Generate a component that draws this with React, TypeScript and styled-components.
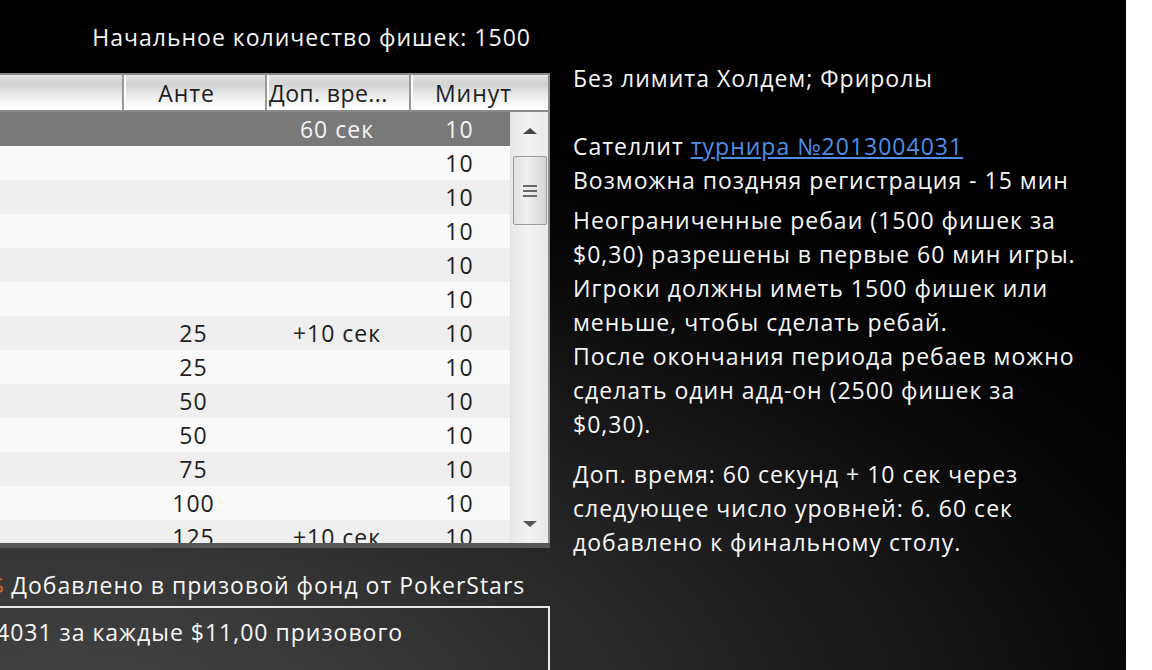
import React from "react";
import styled, { createGlobalStyle } from "styled-components";

const GlobalStyle = createGlobalStyle`
    html, body {
        margin: 0;
        padding: 0;
        background: #ffffff;
        overflow: hidden;
    }
    * {
        box-sizing: border-box;
    }
`;

const Page = styled.div`
    display: flex;
    width: 1152px;
    height: 670px;
    font-family: "Open Sans", "DejaVu Sans", sans-serif;
    font-size: 23px;
    letter-spacing: 1px;
    color: #f6f6f6;
`;

const Main = styled.div`
    display: grid;
    grid-template-columns: 550px 1fr;
    column-gap: 23px;
    width: 1126px;
    height: 670px;
    overflow: hidden;
    background: radial-gradient(ellipse 120% 95% at 5% 108%, #474747 0%, #333 30%, #1a1a1a 60%, #050505 85%, #000 100%);
`;

const Strip = styled.div`
    flex: 1;
    background: #ffffff;
`;

const LeftCol = styled.div`
    display: flex;
    flex-direction: column;
    min-width: 0;
`;

const StartChips = styled.div`
    height: 73px;
    display: flex;
    align-items: center;
    justify-content: flex-end;
    padding-right: 19px;
`;

const Table = styled.div`
    display: flex;
    flex-direction: column;
    width: 550px;
    height: 475px;
    background: #f8f8f8;
    border-bottom: 5px solid #575757;
    color: #1e1e1e;
    overflow: hidden;
`;

const HeaderRow = styled.div`
    display: grid;
    grid-template-columns: 122px 143px 144px 1fr;
    height: 39px;
    flex-shrink: 0;
    border-top: 2px solid #8a8a8a;
    border-right: 2px solid #8a8a8a;
    border-bottom: 2px solid #8a8a8a;
    background: linear-gradient(#e4e4e4 0%, #d2d2d2 25%, #e8e8e8 55%, #fafafa 85%, #ffffff 100%);
`;

const HeaderCell = styled.div<{ $align?: string; $pad?: number }>`
    display: flex;
    align-items: center;
    justify-content: ${(p) => p.$align || "center"};
    padding: 0 ${(p) => p.$pad ?? 2}px 0 2px;
    border-left: 2px solid #9a9a9a;
    box-shadow: inset 2px 0 0 #ffffff;
    white-space: nowrap;
    overflow: hidden;
    &:first-child {
        border-left: none;
        box-shadow: none;
    }
`;

const TruncLabel = styled.span`
    letter-spacing: 0.4px;
`;

const Body = styled.div`
    display: flex;
    flex: 1;
    min-height: 0;
`;

const Rows = styled.div`
    flex: 1;
    overflow: hidden;
`;

const Row = styled.div<{ $selected?: boolean; $alt?: boolean }>`
    display: grid;
    grid-template-columns: 122px 143px 144px 1fr;
    height: 34px;
    align-items: center;
    background: ${(p) => (p.$selected ? "#797979" : p.$alt ? "#efefef" : "#f9f9f9")};
    color: ${(p) => (p.$selected ? "#f4f4f4" : "#1e1e1e")};
`;

const Cell = styled.div`
    text-align: center;
    white-space: nowrap;
`;

const Scrollbar = styled.div`
    display: flex;
    flex-direction: column;
    align-items: center;
    width: 40px;
    background: linear-gradient(90deg, #e9e9e9, #f2f2f2 50%, #e9e9e9);
    border-left: 1px solid #e0e0e0;
    border-right: 2px solid #8a8a8a;
`;

const Arrow = styled.div<{ $down?: boolean }>`
    height: 38px;
    width: 100%;
    display: flex;
    align-items: center;
    justify-content: center;
    &::after {
        content: "";
        border-left: 7px solid transparent;
        border-right: 7px solid transparent;
        ${(p) => (p.$down ? "border-top: 6px solid #555;" : "border-bottom: 6px solid #444;")}
    }
`;

const Thumb = styled.div`
    width: 34px;
    height: 69px;
    margin-top: 6px;
    border: 1px solid #9c9c9c;
    border-radius: 2px;
    background: linear-gradient(90deg, #e2e2e2, #f0f0f0 40%, #d6d6d6);
    display: flex;
    flex-direction: column;
    align-items: center;
    justify-content: center;
    gap: 3px;
`;

const Grip = styled.div`
    width: 14px;
    height: 2px;
    background: #6a6a6a;
`;

const Spacer = styled.div`
    flex: 1;
`;

const Added = styled.div`
    height: 58px;
    display: flex;
    align-items: center;
    padding-top: 16px;
    white-space: nowrap;
`;

const Cut = styled.span`
    color: #d2602a;
    margin-left: -9px;
    margin-right: 6px;
`;

const TicketBox = styled.div`
    flex: 1;
    border: 2px solid #e8e8e8;
    border-left: none;
    border-bottom: none;
    padding-top: 8px;
    white-space: nowrap;
    overflow: hidden;
`;

const ShiftedText = styled.div`
    margin-left: -4px;
`;

const RightCol = styled.div`
    padding-top: 61px;
    line-height: 34px;
    white-space: nowrap;
`;

const Para = styled.p<{ $gap?: number }>`
    margin: ${(p) => p.$gap ?? 0}px 0 0 0;
`;

const Link = styled.a`
    color: #4c8ee6;
    text-decoration: underline;
`;

type Level = { ante: string; extra: string; minutes: string };

const levels: Level[] = [
    { ante: "", extra: "60 сек", minutes: "10" },
    { ante: "", extra: "", minutes: "10" },
    { ante: "", extra: "", minutes: "10" },
    { ante: "", extra: "", minutes: "10" },
    { ante: "", extra: "", minutes: "10" },
    { ante: "", extra: "", minutes: "10" },
    { ante: "25", extra: "+10 сек", minutes: "10" },
    { ante: "25", extra: "", minutes: "10" },
    { ante: "50", extra: "", minutes: "10" },
    { ante: "50", extra: "", minutes: "10" },
    { ante: "75", extra: "", minutes: "10" },
    { ante: "100", extra: "", minutes: "10" },
    { ante: "125", extra: "+10 сек", minutes: "10" },
];

export default function App() {
    return (
        <>
            <GlobalStyle />
            <Page>
                <Main>
                    <LeftCol>
                        <StartChips>Начальное количество фишек: 1500</StartChips>
                        <Table>
                            <HeaderRow>
                                <HeaderCell />
                                <HeaderCell $align="flex-end" $pad={50}>
                                    Анте
                                </HeaderCell>
                                <HeaderCell $align="flex-start">
                                    <TruncLabel>Доп. вре...</TruncLabel>
                                </HeaderCell>
                                <HeaderCell $pad={14}>Минут</HeaderCell>
                            </HeaderRow>
                            <Body>
                                <Rows>
                                    {levels.map((l, i) => (
                                        <Row key={i} $selected={i === 0} $alt={i % 2 === 0}>
                                            <Cell />
                                            <Cell>{l.ante}</Cell>
                                            <Cell>{l.extra}</Cell>
                                            <Cell>{l.minutes}</Cell>
                                        </Row>
                                    ))}
                                </Rows>
                                <Scrollbar>
                                    <Arrow />
                                    <Thumb>
                                        <Grip />
                                        <Grip />
                                        <Grip />
                                    </Thumb>
                                    <Spacer />
                                    <Arrow $down />
                                </Scrollbar>
                            </Body>
                        </Table>
                        <Added>
                            <Cut>$</Cut>Добавлено в призовой фонд от PokerStars
                        </Added>
                        <TicketBox>
                            <ShiftedText>4031 за каждые $11,00 призового</ShiftedText>
                        </TicketBox>
                    </LeftCol>
                    <RightCol>
                        <Para>Без лимита Холдем; Фриролы</Para>
                        <Para $gap={34}>
                            Сателлит <Link>турнира №2013004031</Link>
                        </Para>
                        <Para>Возможна поздняя регистрация - 15 мин</Para>
                        <Para $gap={6}>
                            Неограниченные ребаи (1500 фишек за
                            <br />
                            $0,30) разрешены в первые 60 мин игры.
                            <br />
                            Игроки должны иметь 1500 фишек или
                            <br />
                            меньше, чтобы сделать ребай.
                            <br />
                            После окончания периода ребаев можно
                            <br />
                            сделать один адд-он (2500 фишек за
                            <br />
                            $0,30).
                        </Para>
                        <Para $gap={16}>
                            Доп. время: 60 секунд + 10 сек через
                            <br />
                            следующее число уровней: 6. 60 сек
                            <br />
                            добавлено к финальному столу.
                        </Para>
                    </RightCol>
                </Main>
                <Strip />
            </Page>
        </>
    );
}
